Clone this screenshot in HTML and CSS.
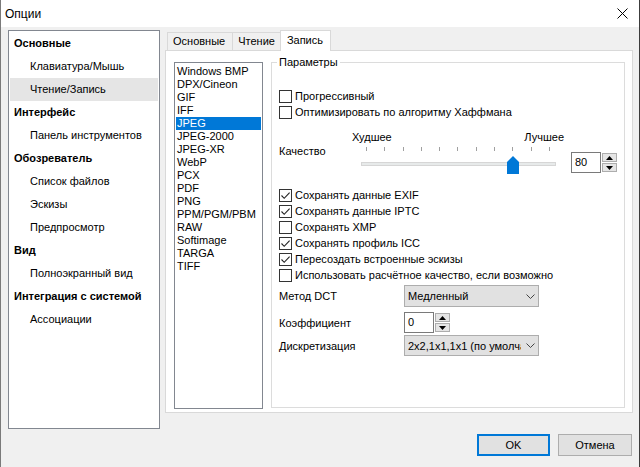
FILE: index.html
```html
<!DOCTYPE html>
<html lang="ru">
<head>
<meta charset="utf-8">
<title>Опции</title>
<link rel="stylesheet" href="styles.css">
</head>
<body>
<div class="window">
  <div class="titlebar">
    <span class="title">Опции</span>
    <svg class="close" width="11" height="11" viewBox="0 0 11 11"><path d="M0.5 0.5 L10.5 10.5 M10.5 0.5 L0.5 10.5" stroke="#000" stroke-width="1"/></svg>
  </div>
  <div class="body">
    <div class="main">
      <ul class="tree">
        <li class="cat">Основные</li>
        <li class="sub">Клавиатура/Мышь</li>
        <li class="sub selected">Чтение/Запись</li>
        <li class="cat">Интерфейс</li>
        <li class="sub">Панель инструментов</li>
        <li class="cat">Обозреватель</li>
        <li class="sub">Список файлов</li>
        <li class="sub">Эскизы</li>
        <li class="sub">Предпросмотр</li>
        <li class="cat">Вид</li>
        <li class="sub">Полноэкранный вид</li>
        <li class="cat">Интеграция с системой</li>
        <li class="sub">Ассоциации</li>
      </ul>
      <div class="tabs">
        <div class="tabstrip">
          <div class="tab tab-main">Основные</div>
          <div class="tab">Чтение</div>
          <div class="tab active">Запись</div>
        </div>
        <div class="tabpanel">
          <ul class="formats">
            <li>Windows BMP</li>
            <li>DPX/Cineon</li>
            <li>GIF</li>
            <li>IFF</li>
            <li class="sel">JPEG</li>
            <li>JPEG-2000</li>
            <li>JPEG-XR</li>
            <li>WebP</li>
            <li>PCX</li>
            <li>PDF</li>
            <li>PNG</li>
            <li>PPM/PGM/PBM</li>
            <li>RAW</li>
            <li>Softimage</li>
            <li>TARGA</li>
            <li>TIFF</li>
          </ul>
          <fieldset class="group">
            <legend>Параметры</legend>
            <div class="group-body">
              <div class="checks first">
                <div class="check"><span class="box"></span><span>Прогрессивный</span></div>
                <div class="check"><span class="box"></span><span>Оптимизировать по алгоритму Хаффмана</span></div>
              </div>
              <div class="quality">
                <span class="q-label">Качество</span>
                <div class="slider">
                  <div class="ends"><span>Худшее</span><span>Лучшее</span></div>
                  <div class="ticks"><i></i><i></i><i></i><i></i><i></i><i></i><i></i><i></i><i></i><i></i><i></i></div>
                  <div class="track-area" style="--v:0.8">
                    <div class="track"></div>
                    <svg class="thumb" width="12" height="18" viewBox="0 0 12 18"><path d="M0 6 L6 0 L12 6 V18 H0 Z" fill="#0078d7"/></svg>
                  </div>
                </div>
                <div class="spin q-spin">
                  <span class="spin-box">80</span>
                  <span class="spin-btns">
                    <span class="spin-btn"><svg width="7" height="4" viewBox="0 0 7 4"><path d="M0 4 L3.5 0 L7 4 Z" fill="#000"/></svg></span>
                    <span class="spin-btn"><svg width="7" height="4" viewBox="0 0 7 4"><path d="M0 0 L3.5 4 L7 0 Z" fill="#000"/></svg></span>
                  </span>
                </div>
              </div>
              <div class="checks second">
                <div class="check"><span class="box"><svg width="11" height="11" viewBox="0 0 11 11"><path d="M1.5 5.5 L4.2 8.3 L9.6 2.6" fill="none" stroke="#222" stroke-width="1.1"/></svg></span><span>Сохранять данные EXIF</span></div>
                <div class="check"><span class="box"><svg width="11" height="11" viewBox="0 0 11 11"><path d="M1.5 5.5 L4.2 8.3 L9.6 2.6" fill="none" stroke="#222" stroke-width="1.1"/></svg></span><span>Сохранять данные IPTC</span></div>
                <div class="check"><span class="box"></span><span>Сохранять XMP</span></div>
                <div class="check"><span class="box"><svg width="11" height="11" viewBox="0 0 11 11"><path d="M1.5 5.5 L4.2 8.3 L9.6 2.6" fill="none" stroke="#222" stroke-width="1.1"/></svg></span><span>Сохранять профиль ICC</span></div>
                <div class="check"><span class="box"><svg width="11" height="11" viewBox="0 0 11 11"><path d="M1.5 5.5 L4.2 8.3 L9.6 2.6" fill="none" stroke="#222" stroke-width="1.1"/></svg></span><span>Пересоздать встроенные эскизы</span></div>
                <div class="check"><span class="box"></span><span>Использовать расчётное качество, если возможно</span></div>
              </div>
              <div class="row row-dct">
                <span class="row-label">Метод DCT</span>
                <div class="select"><span class="select-text">Медленный</span><svg class="chev" width="9" height="5" viewBox="0 0 9 5"><path d="M0.5 0.5 L4.5 4.5 L8.5 0.5" fill="none" stroke="#444" stroke-width="1"/></svg></div>
              </div>
              <div class="row row-coef">
                <span class="row-label">Коэффициент</span>
                <div class="spin">
                  <span class="spin-box">0</span>
                  <span class="spin-btns small">
                    <span class="spin-btn"><svg width="7" height="4" viewBox="0 0 7 4"><path d="M0 4 L3.5 0 L7 4 Z" fill="#000"/></svg></span>
                    <span class="spin-btn"><svg width="7" height="4" viewBox="0 0 7 4"><path d="M0 0 L3.5 4 L7 0 Z" fill="#000"/></svg></span>
                  </span>
                </div>
              </div>
              <div class="row row-disc">
                <span class="row-label">Дискретизация</span>
                <div class="select"><span class="select-text">2x2,1x1,1x1 (по умолчанию)</span><svg class="chev" width="9" height="5" viewBox="0 0 9 5"><path d="M0.5 0.5 L4.5 4.5 L8.5 0.5" fill="none" stroke="#444" stroke-width="1"/></svg></div>
              </div>
            </div>
          </fieldset>
        </div>
      </div>
    </div>
    <div class="buttons">
      <button class="btn default">OK</button>
      <button class="btn">Отмена</button>
    </div>
  </div>
</div>
</body>
</html>
```
FILE: styles.css
```css
* { box-sizing: border-box; }
html, body { margin: 0; padding: 0; }
body {
  font: 11px "Liberation Sans", Arial, sans-serif;
  color: #000;
  background: #fff;
}
.window {
  width: 640px;
  height: 467px;
  display: flex;
  flex-direction: column;
  border-left: 1px solid #7a7a7a;
  border-right: 1px solid #3c3c3c;
  background: #f0f0f0;
}
.titlebar {
  height: 27px;
  background: #fff;
  display: flex;
  align-items: center;
  justify-content: space-between;
  padding: 0 11px 0 4px;
  font-size: 12px;
}
.close { display: block; }
.body {
  flex: 1;
  padding: 3px 6px 0 7px;
  display: flex;
  flex-direction: column;
}
.main {
  display: flex;
  gap: 5px;
  align-items: flex-start;
}
.tree {
  list-style: none;
  margin: 0;
  padding: 1px 0 0;
  width: 153px;
  height: 399px;
  background: #fff;
  border: 1px solid #828790;
}
.tree li {
  height: 23px;
  line-height: 23px;
  margin: 0 1px 0 1px;
  white-space: nowrap;
}
.tree .cat { font-weight: bold; padding-left: 4px; }
.tree .sub { padding-left: 20px; }
.tree .selected { background: #e5e5e5; }

.tabs {
  flex: 1;
  height: 383px;
  display: flex;
  flex-direction: column;
}
.tabstrip {
  height: 20px;
  display: flex;
  align-items: flex-end;
  padding-left: 2px;
}
.tab {
  height: 18px;
  line-height: 17px;
  padding: 0 5px 0 5px;
  border: 1px solid #d9d9d9;
  border-bottom: 0;
  margin-right: -1px;
  background: #f0f0f0;
}
.tab.tab-main { padding: 0 7px 0 5px; }
.tab.active {
  height: 21px;
  line-height: 19px;
  margin-bottom: -1px;
  padding: 0 7px 0 6px;
  background: #fff;
  position: relative;
  z-index: 1;
}
.tabpanel {
  flex: 1;
  background: #fff;
  border: 1px solid #d9d9d9;
  padding: 4px 7px 0 8px;
  display: flex;
  gap: 8px;
  align-items: flex-start;
}
.formats {
  width: 89px;
  height: 347px;
  margin: 7px 0 0;
  padding: 2px 1px;
  list-style: none;
  border: 1px solid #828790;
  flex: none;
}
.formats li {
  height: 13px;
  line-height: 13px;
  padding-left: 1px;
  white-space: nowrap;
}
.formats .sel { background: #0078d7; color: #fff; }

.group {
  flex: 1;
  margin: 0;
  padding: 0;
  min-width: 0;
  height: 353px;
  border: 1px solid #dcdcdc;
}
.group legend {
  margin-left: 5px;
  padding: 0 2px;
  line-height: 14px;
}
.group-body { padding: 19px 7px 0 7px; }

.check {
  display: flex;
  align-items: center;
  gap: 3px;
  height: 16px;
  white-space: nowrap;
}
.box {
  width: 13px;
  height: 13px;
  border: 1px solid #333;
  background: #fff;
  flex: none;
  display: flex;
  align-items: center;
  justify-content: center;
}
.box svg { display: block; }

.quality {
  display: flex;
  align-items: flex-start;
  height: 55px;
}
.q-label {
  width: 73px;
  margin-top: 24px;
  line-height: 14px;
}
.slider {
  width: 212px;
  margin-top: 10px;
}
.ends {
  display: flex;
  justify-content: space-between;
  line-height: 14px;
}
.ticks {
  display: flex;
  justify-content: space-between;
  margin: 3px 14px 0;
  height: 4px;
}
.ticks i {
  width: 1px;
  height: 4px;
  background: #a0a0a0;
}
.track-area {
  position: relative;
  margin: 4px 8px 0 9px;
  height: 19px;
}
.track {
  position: relative;
  top: 7px;
  height: 4px;
  background: #e7eaea;
  border: 1px solid #d6d6d6;
}
.thumb {
  position: absolute;
  top: 1px;
  left: calc(5px + var(--v) * 184px - 6px);
}
.spin { display: flex; height: 21px; }
.q-spin { margin-left: 7px; margin-top: 32px; }
.spin-box {
  width: 30px;
  height: 21px;
  border: 1px solid #7a7a7a;
  background: #fff;
  padding-left: 3px;
  line-height: 19px;
}
.spin-btns {
  width: 16px;
  display: flex;
  flex-direction: column;
  padding: 1px 0 1px 1px;
  gap: 1px;
}
.spin-btn {
  flex: 1;
  border: 1px solid #adadad;
  background: #e5e5e5;
  display: flex;
  align-items: center;
  justify-content: center;
}
.spin-btn svg { display: block; }
.checks.second { margin-top: 12px; }

.row { display: flex; align-items: center; }
.row-label { width: 125px; flex: none; }
.row-dct { margin-top: 2px; height: 22px; }
.row-coef { margin-top: 5px; height: 21px; }
.row-disc { margin-top: 2px; height: 21px; }
.select {
  width: 135px;
  height: 100%;
  display: flex;
  align-items: center;
  background: #e1e1e1;
  border: 1px solid #adadad;
  padding: 0 3px 0 3px;
}
.select-text {
  flex: 1;
  min-width: 0;
  overflow: hidden;
  white-space: nowrap;
  margin-right: 5px;
}
.chev { display: block; flex: none; }

.buttons {
  display: flex;
  justify-content: flex-end;
  gap: 8px;
  margin-top: 5px;
  margin-right: 1px;
}
.btn {
  width: 74px;
  height: 22px;
  background: #e1e1e1;
  border: 1px solid #adadad;
  font: inherit;
  color: #000;
  padding: 0;
}
.btn.default {
  width: 73px;
  border: 2px solid #0078d7;
}
```
